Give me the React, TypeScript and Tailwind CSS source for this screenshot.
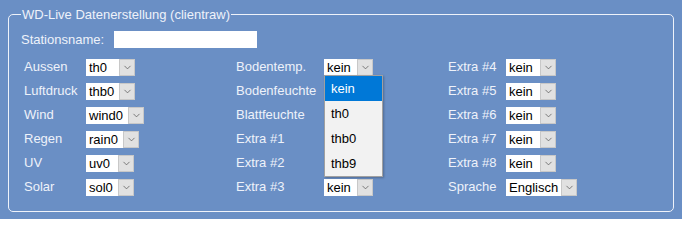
import { ChevronDown } from "lucide-react";

type Sel = { value: string; w: string };

const col1: [string, Sel][] = [
  ["Aussen", { value: "th0", w: "w-[49px]" }],
  ["Luftdruck", { value: "thb0", w: "w-[49px]" }],
  ["Wind", { value: "wind0", w: "w-[58px]" }],
  ["Regen", { value: "rain0", w: "w-[53px]" }],
  ["UV", { value: "uv0", w: "w-[48px]" }],
  ["Solar", { value: "sol0", w: "w-[48px]" }],
];

const col2: [string, Sel | null][] = [
  ["Bodentemp.", { value: "kein", w: "w-[49px]" }],
  ["Bodenfeuchte", null],
  ["Blattfeuchte", null],
  ["Extra #1", null],
  ["Extra #2", null],
  ["Extra #3", { value: "kein", w: "w-[49px]" }],
];

const col3: [string, Sel][] = [
  ["Extra #4", { value: "kein", w: "w-[50px]" }],
  ["Extra #5", { value: "kein", w: "w-[50px]" }],
  ["Extra #6", { value: "kein", w: "w-[50px]" }],
  ["Extra #7", { value: "kein", w: "w-[50px]" }],
  ["Extra #8", { value: "kein", w: "w-[50px]" }],
  ["Sprache", { value: "Englisch", w: "w-[71px]" }],
];

function FakeSelect({ sel }: { sel: Sel }) {
  return (
    <div className={`${sel.w} h-[17px] flex bg-white text-black`}>
      <span className="flex-1 pl-[3px] leading-[17px] text-[13px] whitespace-nowrap overflow-hidden">{sel.value}</span>
      <span className="w-[16px] h-full bg-[#e1e1e1] border border-[#c8c8c8] flex items-center justify-center">
        <ChevronDown className="w-[11px] h-[11px] text-[#555555]" strokeWidth={1.6} />
      </span>
    </div>
  );
}

function Row({ label, sel, lw }: { label: string; sel: Sel | null; lw: string }) {
  return (
    <div className="h-[24px] flex items-center">
      <span className={`${lw} text-[13px] text-[#eef2fa]`}>{label}</span>
      {sel && <FakeSelect sel={sel} />}
    </div>
  );
}

export default function App() {
  return (
    <div className="w-[682px] h-[219px] overflow-hidden bg-[#6a8fc5] pt-[7px] px-[8px] font-['Liberation_Sans',Arial,sans-serif] text-[13px]">
      <fieldset className="relative h-[205px] border border-[#eef2fa] rounded-[5px] pl-[12px] pr-[8px]">
        <legend className="px-[1px] text-[13px] text-[#eef2fa] leading-[15px]">WD-Live Datenerstellung (clientraw)</legend>
        <div className="flex items-center h-[17px] mt-[9px]">
          <span className="w-[93px] text-[#eef2fa]">Stationsname:</span>
          <div className="w-[143px] h-[17px] bg-white" />
        </div>
        <div className="grid grid-cols-[212px_212px_1fr] mt-[7px] pl-[3px]">
          <div>
            {col1.map(([l, s]) => (
              <Row key={l} label={l} sel={s} lw="w-[62px]" />
            ))}
          </div>
          <div>
            {col2.map(([l, s]) => (
              <Row key={l} label={l} sel={s} lw="w-[88px]" />
            ))}
          </div>
          <div>
            {col3.map(([l, s]) => (
              <Row key={l} label={l} sel={s} lw="w-[58px]" />
            ))}
          </div>
        </div>
        <div className="absolute left-[315px] top-[53px] w-[59px] bg-[#f2f2f2] border border-[#a0a0a0] text-[13px] text-black shadow-[1px_1px_2px_rgba(0,0,0,0.25)]">
          <div className="h-[25px] leading-[25px] pl-[6px] bg-[#0078d7] text-white">kein</div>
          <div className="h-[25px] leading-[25px] pl-[6px]">th0</div>
          <div className="h-[25px] leading-[25px] pl-[6px]">thb0</div>
          <div className="h-[25px] leading-[25px] pl-[6px]">thb9</div>
        </div>
      </fieldset>
    </div>
  );
}
